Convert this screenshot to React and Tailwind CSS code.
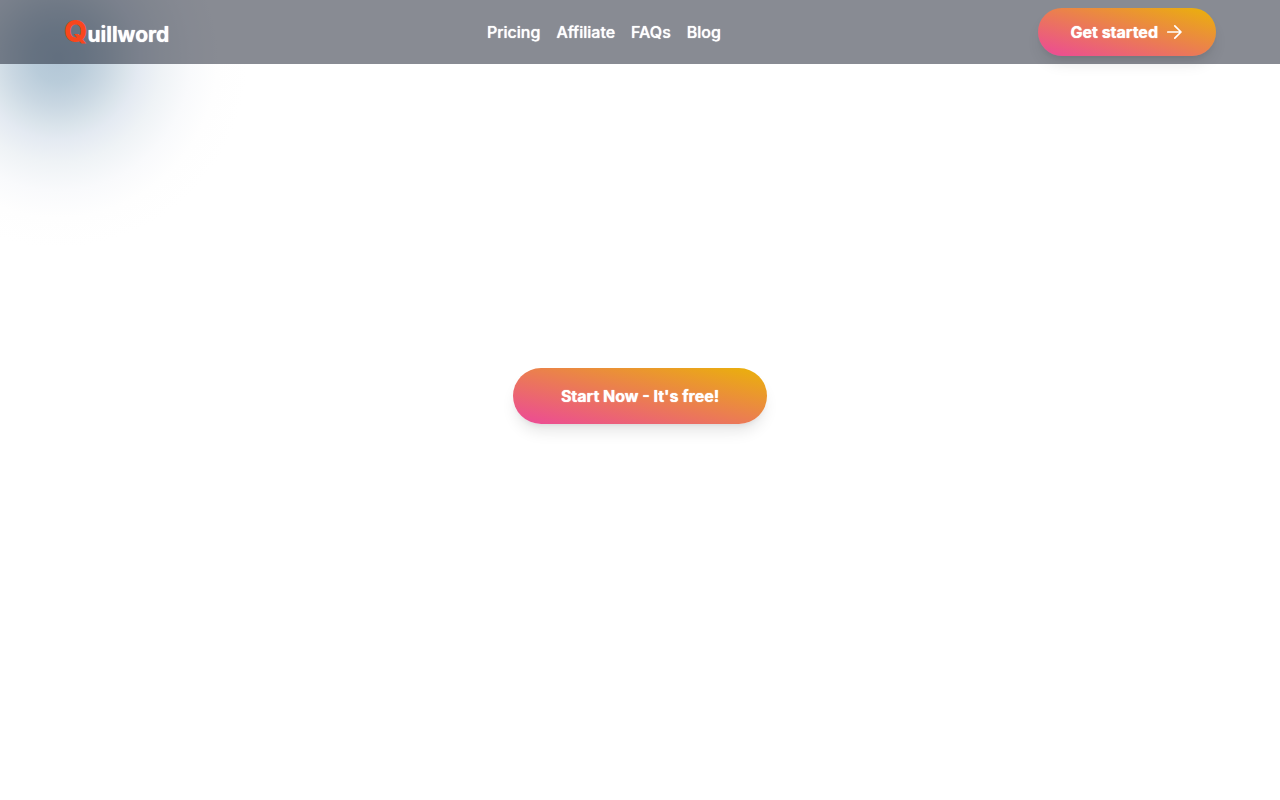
import React from 'react';

const links = [
    { label: 'Pricing', href: '#pricing' },
    { label: 'Affiliate', href: '#affiliate' },
    { label: 'FAQs', href: '#faqs' },
    { label: 'Blog', href: '#blog' },
];

const ArrowIcon = () => (
    <svg className="w-[18px] h-[18px]" viewBox="0 0 18 18" fill="none" stroke="currentColor" strokeWidth="1.7" strokeLinecap="round" strokeLinejoin="round" aria-hidden="true">
        <path d="M1.8 9h13M8.8 2.8L15 9 8.8 15.2" />
    </svg>
);

const Logo = () => (
    <a href="#home" aria-label="Quillword" className="flex items-baseline pt-0.5 text-white">
        <span className="text-3xl leading-8 font-extrabold text-[#f9461c]">Q</span>
        <span className="text-[21px] leading-8 font-bold [text-shadow:0_0_1px_white]">uillword</span>
    </a>
);

const Navbar = () => (
    <header className="relative bg-[#111827]/50">
        <div className="h-16 px-16 flex items-center justify-between">
            <Logo />
            <nav className="flex gap-4 text-white font-medium [text-shadow:0_0_1px_white]">
                {links.map((link) => (
                    <a key={link.label} href={link.href}>{link.label}</a>
                ))}
            </nav>
            <button type="button" className="h-12 px-8 flex items-center gap-2 rounded-full bg-linear-to-tr/srgb from-[#ec4899] to-[#eab308] text-white font-bold shadow-lg [text-shadow:0_0_1px_white]">
                Get started
                <ArrowIcon />
            </button>
        </div>
    </header>
);

const App = () => {
    return (
        <div className="relative min-h-screen flex flex-col overflow-hidden bg-white font-['Inter',sans-serif]">
            {/* soft blue glow in the corner */}
            <div className="absolute -left-[132px] -top-[132px] size-[380px] rounded-full bg-[radial-gradient(circle_closest-side,#b2c6d6_0%,#b9ccda_13%,#c9d7e2_25%,#dae4eb_36%,#e4eaf2_43%,#eff3f6_55%,#f9fafc_70%,#fefefe_84%,#ffffff_100%)]" />
            <Navbar />
            <main className="relative flex-1 flex items-center justify-center pb-[72px]">
                <button type="button" className="h-14 px-12 rounded-full bg-linear-to-tr/srgb from-[#ec4899] to-[#eab308] text-white font-bold shadow-lg [text-shadow:0_0_1px_white]">
                    Start Now - It's free!
                </button>
            </main>
        </div>
    );
};

export default App;
